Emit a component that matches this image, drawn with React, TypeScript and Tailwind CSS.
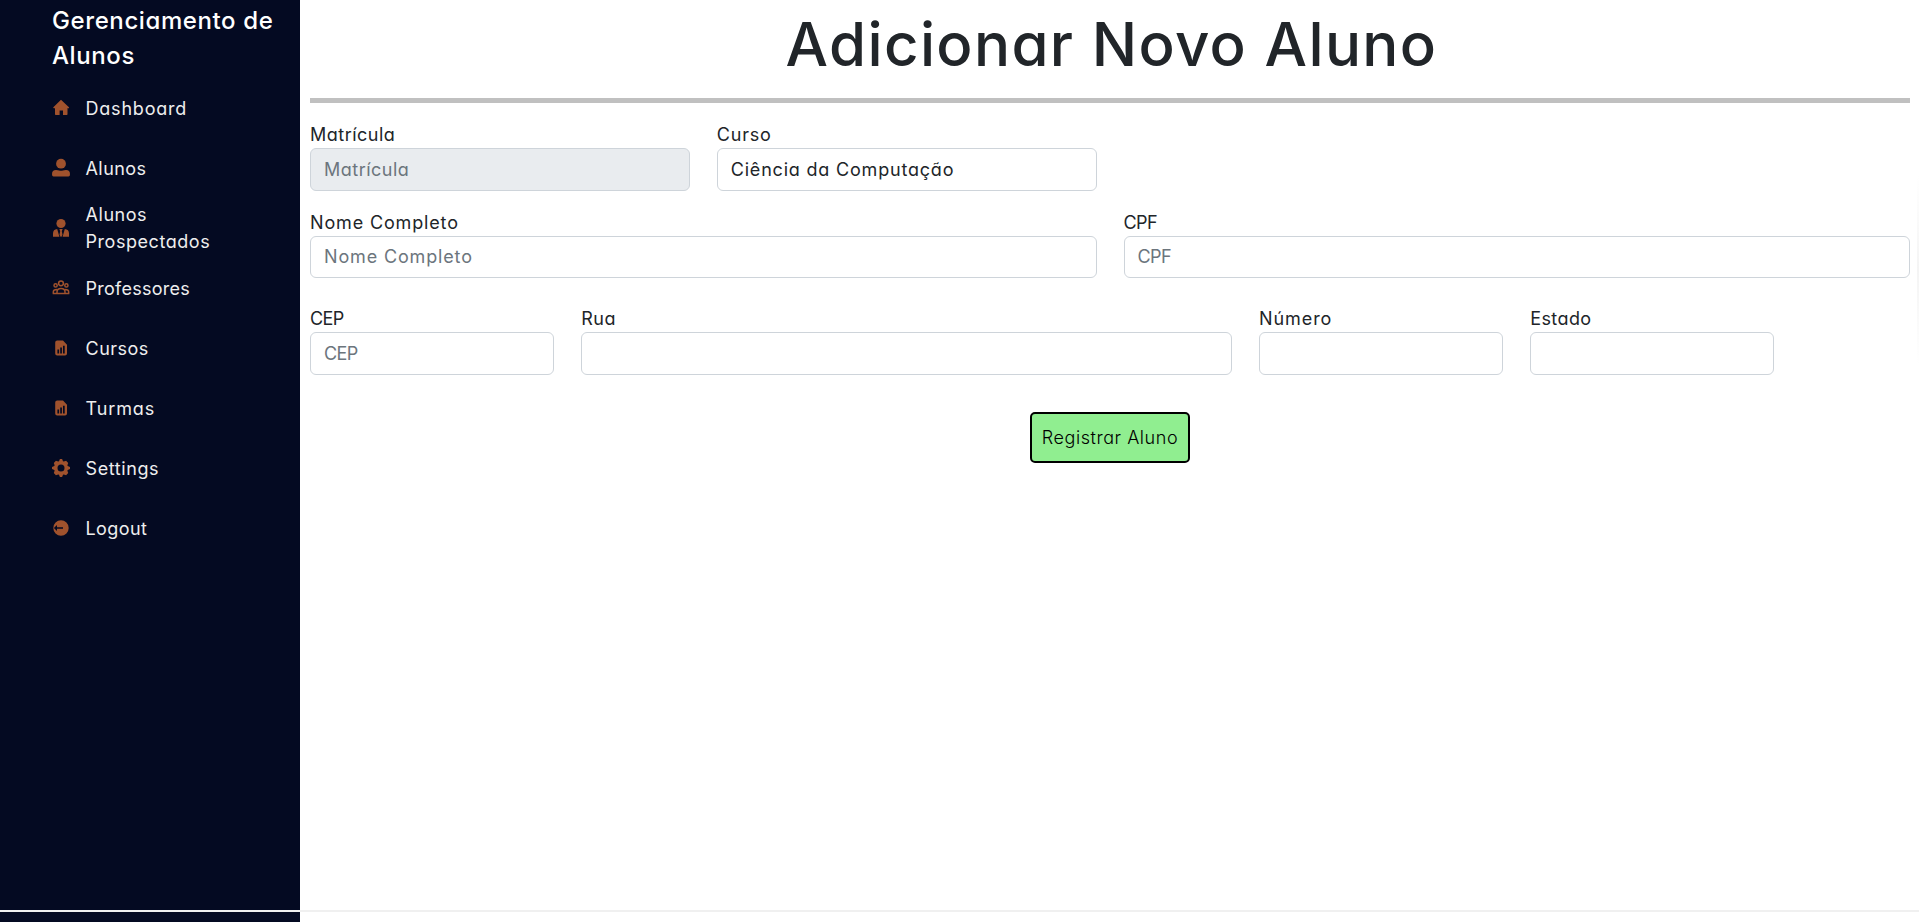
import type { ReactNode } from "react";

function Icon({ children }: { children: ReactNode }) {
  return (
    <svg viewBox="0 0 20 20" className="size-5 shrink-0 fill-[#a0522d]">
      {children}
    </svg>
  );
}

const icons = {
  home: <path d="M10 1.800 18.200 9.400 17.300 10.400 16.500 9.900v6.400q0 .7-.7.7H12v-4.400H8.600V17H4.700q-.7 0-.7-.7V9.900l-.9.5-1-1z" />,
  person: (
    <>
      <circle cx="10" cy="5.700" r="4.900" />
      <path d="M1 16.200q0-4.200 4-4.200 2 0 3 .5 2 .5 4 0 1-.5 3-.5 4 0 4 4.200 0 2.200-1.500 2.200h-15Q1 18.400 1 16.200z" />
    </>
  ),
  tie: (
    <>
      <circle cx="10" cy="5.500" r="4.600" />
      <path d="M2 18.800v-3.300q0-4.300 4.200-4.600L8.400 18.800zM18 18.800v-3.300q0-4.300-4.200-4.600L11.600 18.800zM8.300 11h3.400l-.9 1.900.7 3.900-1 2h-1l-1-2 .7-3.900z" />
    </>
  ),
  people: (
    <g className="fill-none stroke-[#a0522d] stroke-[1.500]">
      <circle cx="10" cy="5.300" r="2.400" />
      <circle cx="4.600" cy="7.400" r="1.600" />
      <circle cx="15.400" cy="7.400" r="1.600" />
      <path d="M6 15.400v-1.500q0-3.500 4-3.500t4 3.500v1.500M2.300 15.800v-1.900q0-2.400 3.700-2.400M17.700 15.800v-1.900q0-2.400-3.700-2.400M1.700 15.500h16.600" />
    </g>
  ),
  report: (
    <path
      fillRule="evenodd"
      d="M6.200 2.500H12l4 4.300v8.700q0 2-2 2H6.200q-2 0-2-2v-11q0-2 2-2zM6.400 11.500v4h1.700v-4zM9.200 9.600v5.900h1.700V9.600zM12 7.700v7.800h1.700V7.700z"
    />
  ),
  gear: (
    <path
      fillRule="evenodd"
      d="M8.900 1h2.200l.9 2.300.8.300 2.300-.8 2.100 2.100-.8 2.300.3.800 2.300.9v2.200l-2.300.9-.3.800.8 2.300-2.100 2.100-2.300-.8-.8.300-.9 2.300H8.900L8 16.700l-.8-.3-2.300.8-2.100-2.100.8-2.300-.3-.8L1 11.100V8.900L3.300 8l.3-.8-.8-2.300 2.100-2.100 2.300.8.800-.3zM10 6.500a3.500 3.500 0 1 0 0 7 3.500 3.500 0 0 0 0-7z"
    />
  ),
  logout: (
    <path
      fillRule="evenodd"
      d="M10 2.300a7.700 7.700 0 1 1 0 15.400A7.700 7.700 0 0 1 10 2.300zM6 7.100 2.900 10 6 12.900v-2.100h6V9.200H6z"
    />
  ),
};

const menu = [
  { label: "Dashboard", icon: icons.home, tracking: "tracking-[0.8px]" },
  { label: "Alunos", icon: icons.person, tracking: "tracking-[0.45px]" },
  { label: "Alunos Prospectados", icon: icons.tie, tracking: "tracking-[0.550px]" },
  { label: "Professores", icon: icons.people, tracking: "tracking-[0.25px]" },
  { label: "Cursos", icon: icons.report, tracking: "tracking-[0.5px]" },
  { label: "Turmas", icon: icons.report, tracking: "tracking-[0.9px]" },
  { label: "Settings", icon: icons.gear, tracking: "tracking-[0.6px]" },
  { label: "Logout", icon: icons.logout, tracking: "tracking-[0.4px]" },
];

type FieldProps = {
  label: string;
  className: string;
  inputHeight?: string;
  placeholder?: string;
  defaultValue?: string;
  disabled?: boolean;
};

function Field({ label, className, inputHeight = "h-[43px]", ...rest }: FieldProps) {
  return (
    <label className={className}>
      <span className="block h-[27px] leading-[27px]">{label}</span>
      <input
        className={`${inputHeight} block w-full rounded-md border border-[#ced4da] bg-white px-[13px] pb-px placeholder:text-[#6c757d] placeholder:opacity-100 disabled:bg-[#e9ecef]`}
        {...rest}
      />
    </label>
  );
}

export default function App() {
  return (
    <div className="relative flex h-[922px] w-full overflow-hidden bg-white font-['Inter',sans-serif] text-[18px] font-normal text-[#212529] [font-feature-settings:'cv11']">
      <aside className="w-[300px] shrink-0 bg-[#040a22] pl-[51px] text-white">
        <h2 className="pt-[3px] pl-px text-[24px] leading-[35px] font-medium tracking-[0.6px] whitespace-nowrap">
          Gerenciamento de
          <br />
          Alunos
        </h2>
        <nav className="mt-[5px]">
          {menu.map((item) => (
            <a key={item.label} className="flex h-[60px] items-center gap-[14.500px] leading-[27px] text-[#eee]">
              <Icon>{item.icon}</Icon>
              <span className={`${item.tracking} w-[150px]`}>{item.label}</span>
            </a>
          ))}
        </nav>
      </aside>
      <main className="min-w-0 flex-1 pr-[9px] pl-2.5">
        <h1 className="h-[98px] pl-[3px] text-center text-[60px] leading-[88px] font-medium tracking-[1.350px]">Adicionar Novo Aluno</h1>
        <hr className="h-[5px] border-0 bg-[#c0c0c0]" />
        <form className="mt-[18px] grid grid-cols-12 gap-x-[27px]">
          <Field label="Matrícula" placeholder="Matrícula" disabled className="col-span-3 tracking-[0.5px]" />
          <Field label="Curso" defaultValue="Ciência da Computação" className="col-span-3 tracking-[0.8px]" />
          <Field label="Nome Completo" placeholder="Nome Completo" inputHeight="h-[42px]" className="col-span-6 col-start-1 mt-[18px] tracking-[0.85px]" />
          <Field label="CPF" placeholder="CPF" inputHeight="h-[42px]" className="col-span-6 mt-[18px] tracking-[-0.6px]" />
          <Field label="CEP" placeholder="CEP" className="col-span-2 mt-[27px] tracking-[-0.6px]" />
          <Field label="Rua" className="col-span-5 mt-[27px] tracking-[0.5px]" />
          <Field label="Número" className="col-span-2 mt-[27px] tracking-[0.9px]" />
          <Field label="Estado" className="col-span-2 mt-[27px] tracking-[0.4px]" />
          <div className="col-span-12 mt-[37px] flex justify-center">
            <button className="h-[51px] w-[160px] rounded-[5px] border-2 border-black bg-[#90ee90] font-light tracking-[0.55px] whitespace-nowrap text-black">
              Registrar Aluno
            </button>
          </div>
        </form>
      </main>
      <div className="absolute top-[910px] left-0 h-0.5 w-full bg-[#f0f0f0]" />
      <div className="absolute top-[175px] right-0 h-[190px] w-0.5 bg-linear-to-b from-white via-[#f4f4f4] to-white" />
    </div>
  );
}
